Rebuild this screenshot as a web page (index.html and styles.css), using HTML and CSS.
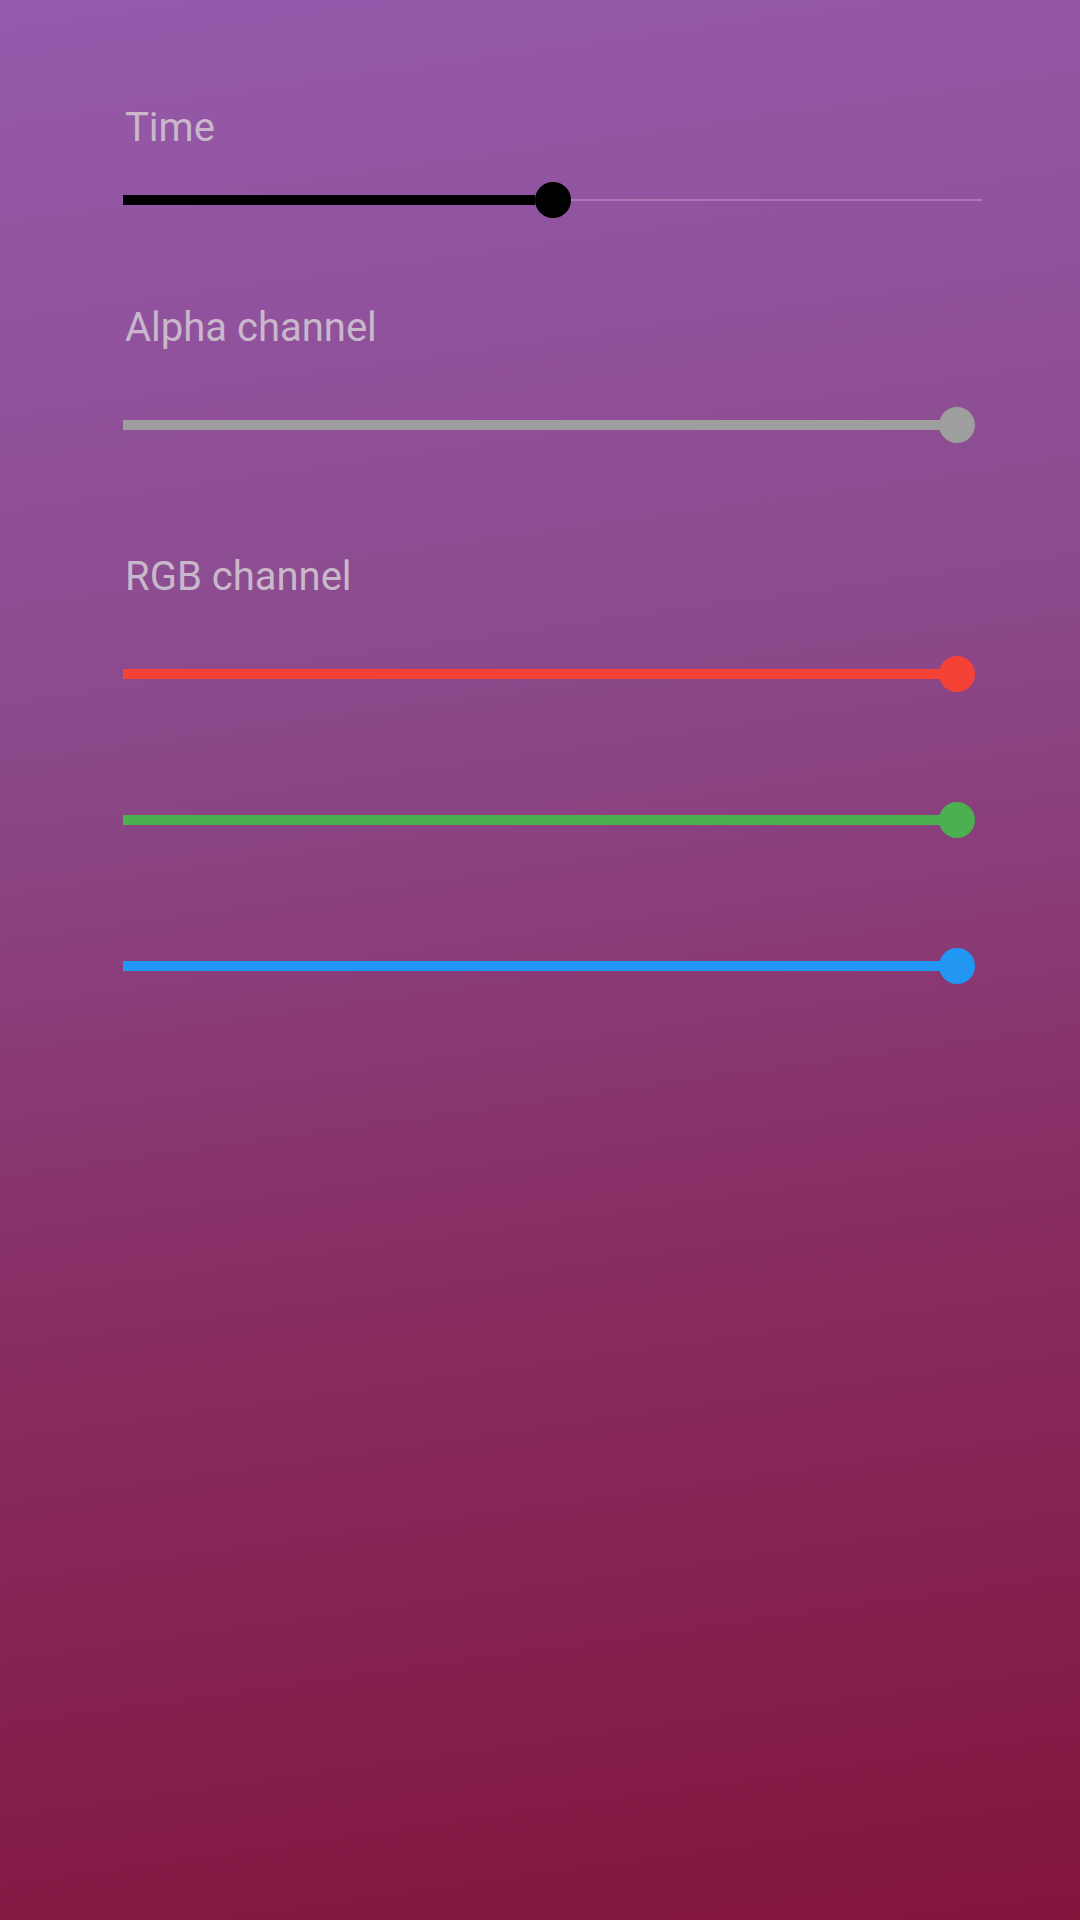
FILE: index.html
```html
<!DOCTYPE html>
<html>
<head>
<meta charset="utf-8">
<link rel="stylesheet" href="styles.css">
</head>
<body>
<main class="panel">
  <section class="group group-time">
    <div class="label">Time</div>
    <div class="slider slider-time">
      <div class="fill fill-black" style="width:412px"></div>
      <div class="thumb thumb-black"></div>
      <div class="rest"></div>
    </div>
  </section>
  <section class="group group-alpha">
    <div class="label">Alpha channel</div>
    <div class="slider slider-full">
      <div class="fill fill-gray"></div>
      <div class="thumb thumb-gray"></div>
    </div>
  </section>
  <section class="group group-rgb">
    <div class="label">RGB channel</div>
    <div class="slider slider-full">
      <div class="fill fill-red"></div>
      <div class="thumb thumb-red"></div>
    </div>
    <div class="slider slider-full spaced">
      <div class="fill fill-green"></div>
      <div class="thumb thumb-green"></div>
    </div>
    <div class="slider slider-full spaced">
      <div class="fill fill-blue"></div>
      <div class="thumb thumb-blue"></div>
    </div>
  </section>
</main>
</body>
</html>
```

FILE: styles.css
```css
html, body {
  margin: 0;
  padding: 0;
}
body {
  width: 1080px;
  height: 1920px;
  background: linear-gradient(172deg, #955aac 0%, #8b4a8c 35%, #882d62 65%, #82153c 100%);
  font-family: Roboto, "Noto Sans", sans-serif;
  overflow: hidden;
}
.panel {
  display: flex;
  flex-direction: column;
  padding: 105px 0 0 123px;
}
.group {
  display: flex;
  flex-direction: column;
}
.group-alpha {
  margin-top: 87px;
}
.group-rgb {
  margin-top: 111px;
}
.label {
  font-size: 40px;
  line-height: 46px;
  height: 46px;
  color: #c9b8cb;
  padding-left: 2px;
}
.slider {
  display: flex;
  align-items: center;
  height: 36px;
}
.slider-time {
  width: 859px;
  margin-top: 31px;
}
.slider-full {
  width: 852px;
  margin-top: 56px;
}
.slider-full.spaced {
  margin-top: 110px;
}
.fill {
  height: 10px;
  flex: 0 0 auto;
}
.slider-full .fill {
  flex: 1 1 auto;
  margin-right: -2px;
}
.thumb {
  width: 36px;
  height: 36px;
  border-radius: 50%;
  flex: 0 0 auto;
  position: relative;
}
.rest {
  flex: 1 1 auto;
  height: 2px;
  background: rgba(255, 255, 255, 0.22);
}
.fill-black, .thumb-black { background: #000; }
.fill-gray, .thumb-gray { background: #9e9e9e; }
.fill-red, .thumb-red { background: #f44336; }
.fill-green, .thumb-green { background: #4caf50; }
.fill-blue, .thumb-blue { background: #2196f3; }
```
